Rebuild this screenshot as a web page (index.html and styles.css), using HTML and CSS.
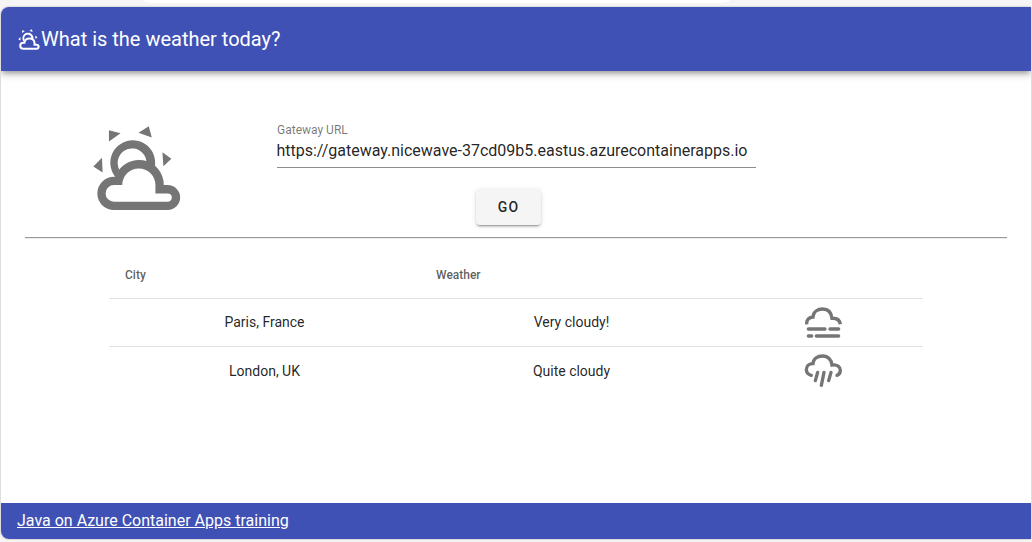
FILE: index.html
```html
<!DOCTYPE html>
<html lang="en">
<head>
<meta charset="utf-8">
<title>What is the weather today?</title>
<link rel="stylesheet" href="styles.css">
</head>
<body>
<svg class="defs" aria-hidden="true">
  <symbol id="sun-cloud" viewBox="39 45 265 257">
    <path fill="currentColor" fill-rule="evenodd" d="M102 300A50 50 0 0 1 102 200H106A75 75 0 0 1 252 225H264A37.5 37.5 0 0 1 264 300ZM102 275H264A12.5 12.5 0 0 0 264 250H227V225A50 50 0 0 0 127 225H102A25 25 0 0 0 102 275Z"/>
    <path fill="currentColor" d="M107 201A67.5 67.5 0 1 1 225 170L200 154A43.5 43.5 0 1 0 118 178ZM87 60L122 69L87 94ZM176 67L207 48L216 82ZM248 126L275 146L251 168ZM66 143L40 169L68 187Z"/>
  </symbol>
</svg>
<div class="strip"><div class="tab"></div></div>
<div class="app">
  <header class="toolbar">
    <svg class="logo"><use href="#sun-cloud"/></svg>
    <span>What is the weather today?</span>
  </header>
  <main class="content">
    <section class="query">
      <svg class="hero"><use href="#sun-cloud"/></svg>
      <form class="form">
        <label class="label" for="gateway">Gateway URL</label>
        <input class="url" id="gateway" value="https://gateway.nicewave-37cd09b5.eastus.azurecontainerapps.io">
        <button class="go" type="button">GO</button>
      </form>
    </section>
    <div class="divider"></div>
    <div class="table">
      <div class="row head"><span>City</span><span>Weather</span></div>
      <div class="row">
        <span class="cell text">Paris, France</span><span class="cell text">Very cloudy!</span>
        <span class="cell"><svg class="icon" viewBox="42 46 120 105">
          <path d="M50 104C49 92 56 82 69 82C70 66 83 58 98 58C114 58 124 69 126 86C140 85 149 91 151 104"/>
          <path class="round" d="M55 118H105M120 118H146M55 139H65M79 139H146"/>
        </svg></span>
      </div>
      <div class="row last">
        <span class="cell">London, UK</span><span class="cell">Quite cloudy</span>
        <span class="cell"><svg class="icon" viewBox="42 192 120 105">
          <path class="round" d="M64 256C54 253 49 247 49 239C49 228 57 221 69 221C70 205 83 198 98 198C114 198 124 209 126 225C142 222 151 231 151 241C151 249 148 254 141 256"/>
          <path class="round" d="M83 247L76 272M102 247L94 286M123 247L116 272"/>
        </svg></span>
      </div>
    </div>
  </main>
  <footer class="footer"><a href="#">Java on Azure Container Apps training</a></footer>
</div>
</body>
</html>
```
FILE: styles.css
```css
* { box-sizing: border-box; }
body {
  margin: 0;
  height: 542px;
  overflow: hidden;
  background: #f5f5f6;
  font-family: Roboto, "Liberation Sans", sans-serif;
  color: rgba(0, 0, 0, .87);
}
.defs { display: none; }
.strip { height: 7px; padding-left: 144px; overflow: hidden; }
.tab {
  width: 586px;
  height: 3px;
  background: #fff;
  border-radius: 0 0 10px 10px / 0 0 3px 3px;
}
.app {
  display: flex;
  flex-direction: column;
  width: 1030px;
  height: 532px;
  margin-left: 1px;
  overflow: hidden;
  background: #fff;
  border-radius: 8px 0 0 8px;
  box-shadow: 0 0 2px rgba(0, 0, 0, .35);
}
.toolbar {
  display: flex;
  align-items: center;
  flex: none;
  height: 64px;
  padding-left: 17px;
  background: #3f51b5;
  color: #fff;
  font-size: 20px;
  box-shadow: 0 3px 5px -1px rgba(0, 0, 0, .3), 0 4px 8px rgba(0, 0, 0, .14);
}
.logo { width: 22px; height: 21px; margin-right: 1px; }
.content { flex: 1; padding: 0 24px; }
.query { display: flex; height: 166px; padding: 54px 0 0 68px; }
.hero { width: 88px; height: 86px; margin-right: 96px; color: #757575; }
.form { display: flex; flex-direction: column; width: 479px; }
.label {
  height: 14px;
  margin-top: -2px;
  font-size: 12px;
  line-height: 14px;
  color: rgba(0, 0, 0, .54);
}
.url {
  width: 479px;
  height: 31px;
  padding: 0 0 4px;
  border: 0;
  border-bottom: 1px solid #8d8d8d;
  background: none;
  color: inherit;
  font: 16px/20px Roboto, "Liberation Sans", sans-serif;
  text-indent: -0.6px;
}
.go {
  width: 65px;
  height: 36px;
  margin: 21px 0 0 199px;
  padding: 0;
  border: 0;
  border-radius: 4px;
  background: #f5f5f5;
  color: inherit;
  font: 500 14px/36px Roboto, "Liberation Sans", sans-serif;
  letter-spacing: 1.25px;
  box-shadow: 0 3px 1px -2px rgba(0, 0, 0, .2), 0 2px 2px rgba(0, 0, 0, .14), 0 1px 5px rgba(0, 0, 0, .12);
}
.divider { height: 2px; border-top: 1px solid #9a9a9a; border-bottom: 1px solid #ededed; }
.table { width: 814px; margin: 4px 0 0 84px; font-size: 14px; }
.row {
  display: grid;
  grid-template-columns: 311px 303px 200px;
  align-items: center;
  height: 48px;
  border-bottom: 1px solid #e0e0e0;
}
.head {
  height: 56px;
  padding: 8px 0 0 16px;
  font-size: 12px;
  font-weight: 500;
  color: rgba(0, 0, 0, .65);
}
.last { border-bottom: 0; }
.cell { text-align: center; }
.text { padding-bottom: 2px; }
.icon {
  display: block;
  width: 40px;
  height: 35px;
  margin: 0 0 0 81px;
  fill: none;
  stroke: #757575;
  stroke-width: 10;
}
.round { stroke-linecap: round; }
.footer {
  display: flex;
  align-items: center;
  height: 36px;
  padding: 0 0 2px 16px;
  background: #3f51b5;
  font-size: 16px;
}
.footer a { color: #fff; }
```
